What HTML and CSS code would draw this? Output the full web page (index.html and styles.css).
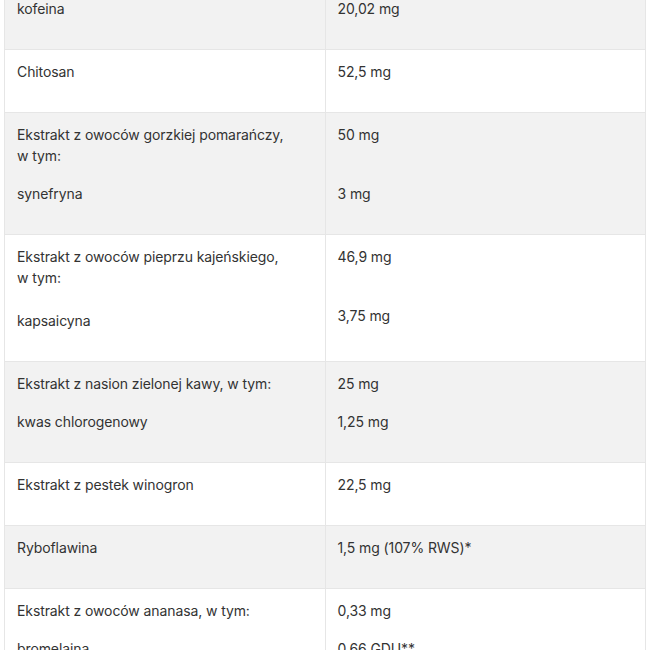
FILE: index.html
```html
<!DOCTYPE html>
<html lang="pl">
<head>
<meta charset="utf-8">
<title>Skład</title>
<link rel="stylesheet" href="styles.css">
</head>
<body>
<div class="wrap">
<table class="facts">
  <tbody>
    <tr><td><p>kofeina</p></td><td><p>20,02 mg</p></td></tr>
    <tr><td><p>Chitosan</p></td><td><p>52,5 mg</p></td></tr>
    <tr><td><p>Ekstrakt z owoców gorzkiej pomarańczy,<br>w tym:</p><p>synefryna</p></td><td><p>50 mg<br>&nbsp;</p><p>3 mg</p></td></tr>
    <tr><td><p>Ekstrakt z owoców pieprzu kajeńskiego,<br>w tym:</p><p class="gap">kapsaicyna</p></td><td><p>46,9 mg<br>&nbsp;</p><p>3,75 mg</p></td></tr>
    <tr><td><p>Ekstrakt z nasion zielonej kawy, w tym:</p><p>kwas chlorogenowy</p></td><td><p>25 mg</p><p>1,25 mg</p></td></tr>
    <tr><td><p>Ekstrakt z pestek winogron</p></td><td><p>22,5 mg</p></td></tr>
    <tr><td><p>Ryboflawina</p></td><td><p>1,5 mg (107% RWS)*</p></td></tr>
    <tr><td><p>Ekstrakt z owoców ananasa, w tym:</p><p>bromelaina</p></td><td><p>0,33 mg</p><p>0,66 GDU**</p></td></tr>
  </tbody>
</table>
</div>
</body>
</html>
```

FILE: styles.css
```css
html, body {
  margin: 0;
  padding: 0;
  background: #ffffff;
}
body {
  font-family: "Inter", "Liberation Sans", sans-serif;
  font-size: 14px;
  letter-spacing: -0.1px;
  color: #333333;
  overflow: hidden;
}
.wrap {
  padding: 0 4px;
  margin-top: -14px;
}
.facts {
  width: 642px;
  border-collapse: collapse;
  table-layout: fixed;
}
.facts td {
  width: 50%;
  vertical-align: top;
  padding: 11px 12px 13px;
  border: 1px solid #e6e6e6;
}
.facts tr:nth-child(odd) td {
  background: #f2f2f2;
}
.facts p {
  margin: 0 0 17px;
  line-height: 21px;
}
.facts p.gap {
  padding-top: 5px;
}
```
